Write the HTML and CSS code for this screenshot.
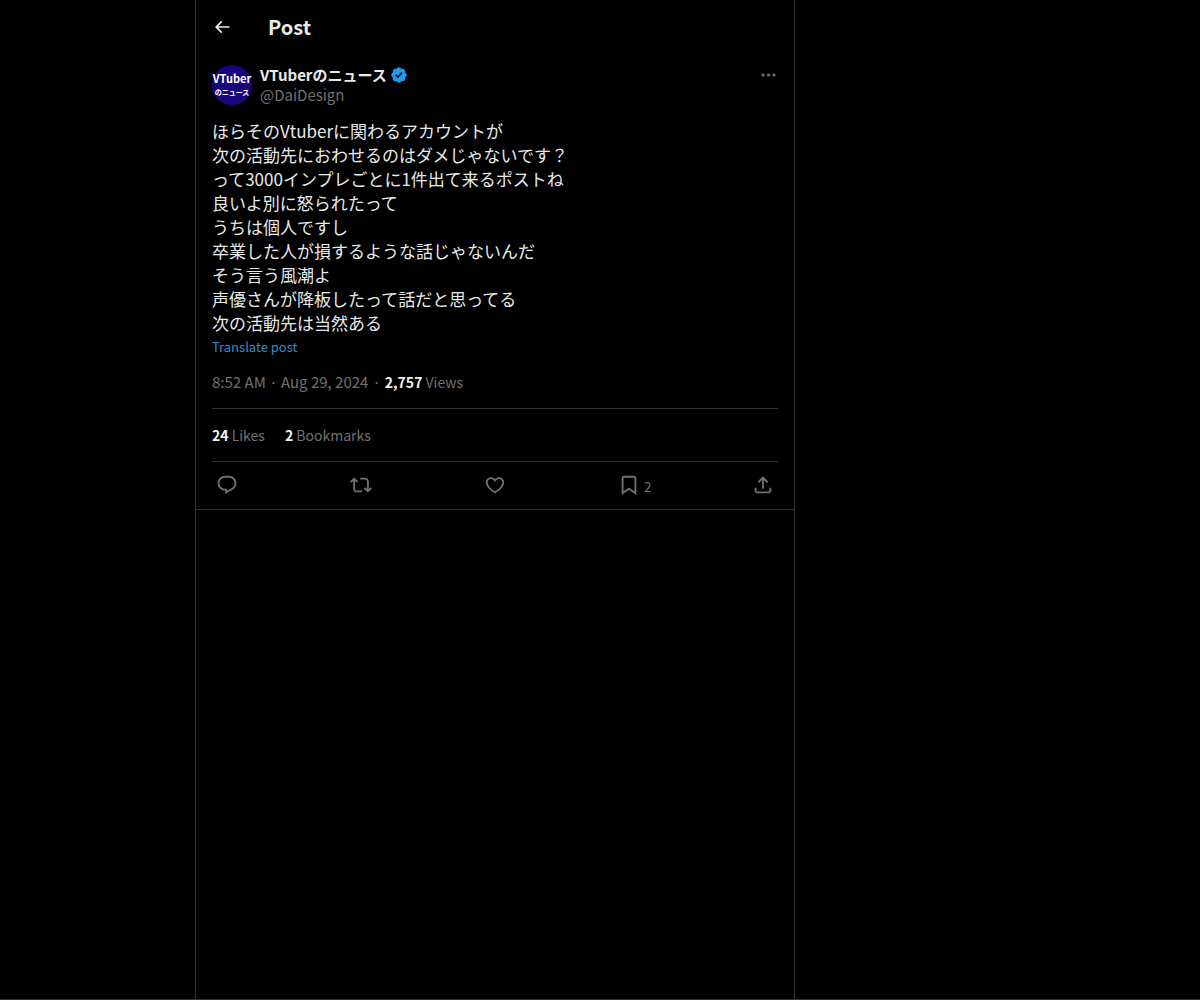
FILE: index.html
```html
<!DOCTYPE html>
<html lang="ja">
<head>
<meta charset="utf-8">
<meta name="viewport" content="width=device-width, initial-scale=1">
<title>Post</title>
<link rel="stylesheet" href="styles.css">
</head>
<body>
<main class="column">
  <header class="topbar">
    <button class="icon-button" type="button" aria-label="Back">
      <svg class="icon-small" viewBox="0 0 24 24" aria-hidden="true"><path d="M7.414 13l5.043 5.04-1.414 1.42L3.586 12l7.457-7.46 1.414 1.42L7.414 11H21v2H7.414z"/></svg>
    </button>
    <h1 class="title">Post</h1>
  </header>
  <article class="post">
    <div class="author">
      <div class="avatar"><span class="avatar-top">VTuber</span><span class="avatar-bottom">のニュース</span></div>
      <div class="identity">
        <a class="name" href="#">VTuberのニュース
          <svg class="badge" viewBox="0 0 22 22" aria-label="Verified account"><path d="M20.396 11c-.018-.646-.215-1.275-.57-1.816-.354-.54-.852-.972-1.438-1.246.223-.607.27-1.264.14-1.897-.131-.634-.437-1.218-.882-1.687-.47-.445-1.053-.75-1.687-.882-.633-.13-1.29-.083-1.897.14-.273-.587-.704-1.086-1.245-1.44S11.647 1.62 11 1.604c-.646.017-1.273.213-1.813.568s-.969.854-1.24 1.44c-.608-.223-1.267-.272-1.902-.14-.635.13-1.22.436-1.69.882-.445.47-.749 1.055-.878 1.688-.13.633-.08 1.29.144 1.896-.587.274-1.087.705-1.443 1.245-.356.54-.555 1.17-.574 1.817.02.647.218 1.276.574 1.817.356.54.856.972 1.443 1.245-.224.606-.274 1.263-.144 1.896.13.634.433 1.218.877 1.688.47.443 1.054.747 1.687.878.633.132 1.29.084 1.897-.136.274.586.705 1.084 1.246 1.439.54.354 1.17.551 1.816.569.647-.016 1.276-.213 1.817-.567s.972-.854 1.245-1.44c.604.239 1.266.296 1.903.164.636-.132 1.22-.447 1.68-.907.46-.46.776-1.044.908-1.681s.075-1.299-.165-1.903c.586-.274 1.084-.705 1.439-1.246.354-.54.551-1.17.569-1.816zM9.662 14.85l-3.429-3.428 1.293-1.302 2.072 2.072 4.4-4.794 1.347 1.246z"/></svg>
        </a>
        <a class="handle" href="#">@DaiDesign</a>
      </div>
      <button class="more" type="button" aria-label="More">
        <svg class="icon-more" viewBox="0 0 24 24" aria-hidden="true"><path d="M3 12c0-1.1.9-2 2-2s2 .9 2 2-.9 2-2 2-2-.9-2-2zm9 2c1.1 0 2-.9 2-2s-.9-2-2-2-2 .9-2 2 .9 2 2 2zm7 0c1.1 0 2-.9 2-2s-.9-2-2-2-2 .9-2 2 .9 2 2 2z"/></svg>
      </button>
    </div>
    <p class="body">ほらそのVtuberに関わるアカウントが<br>次の活動先におわせるのはダメじゃないです？<br>って3000インプレごとに1件出て来るポストね<br>良いよ別に怒られたって<br>うちは個人ですし<br>卒業した人が損するような話じゃないんだ<br>そう言う風潮よ<br>声優さんが降板したって話だと思ってる<br>次の活動先は当然ある</p>
    <button class="translate" type="button">Translate post</button>
    <div class="meta">
      <a href="#">8:52 AM · Aug 29, 2024</a><span class="dot">·</span><span class="figure"><strong>2,757</strong> Views</span>
    </div>
    <div class="stats">
      <a class="figure" href="#"><strong>24</strong> Likes</a>
      <span class="figure"><strong>2</strong> Bookmarks</span>
    </div>
    <div class="actions">
      <button class="action" type="button" aria-label="Reply"><svg class="icon" viewBox="0 0 24 24" aria-hidden="true"><path d="M1.751 10c0-4.42 3.584-8 8.005-8h4.366c4.49 0 8.129 3.64 8.129 8.13 0 2.96-1.607 5.68-4.196 7.11l-8.054 4.46v-3.69h-.067c-4.49.1-8.183-3.51-8.183-8.01zm8.005-6c-3.317 0-6.005 2.69-6.005 6 0 3.37 2.77 6.08 6.138 6.01l.351-.01h1.761v2.3l5.087-2.81c1.951-1.08 3.163-3.13 3.163-5.36 0-3.39-2.744-6.13-6.129-6.13H9.756z"/></svg></button>
      <button class="action" type="button" aria-label="Repost"><svg class="icon" viewBox="0 0 24 24" aria-hidden="true"><path d="M4.5 3.88l4.432 4.14-1.364 1.46L5.5 7.55V16c0 1.1.896 2 2 2H13v2H7.5c-2.209 0-4-1.79-4-4V7.55L1.432 9.48.068 8.02 4.5 3.88zM16.5 6H11V4h5.5c2.209 0 4 1.79 4 4v8.45l2.068-1.93 1.364 1.46-4.432 4.14-4.432-4.14 1.364-1.46 2.068 1.93V8c0-1.1-.896-2-2-2z"/></svg></button>
      <button class="action" type="button" aria-label="Like"><svg class="icon" viewBox="0 0 24 24" aria-hidden="true"><path d="M16.697 5.5c-1.222-.06-2.679.51-3.89 2.16l-.805 1.09-.806-1.09C9.984 6.01 8.526 5.44 7.304 5.5c-1.243.07-2.349.78-2.91 1.91-.552 1.12-.633 2.78.479 4.82 1.074 1.97 3.257 4.27 7.129 6.61 3.87-2.34 6.052-4.64 7.126-6.61 1.111-2.04 1.03-3.7.477-4.82-.561-1.13-1.666-1.84-2.908-1.91zm4.187 7.69c-1.351 2.48-4.001 5.12-8.379 7.67l-.503.3-.504-.3c-4.379-2.55-7.029-5.19-8.382-7.67-1.36-2.5-1.41-4.86-.514-6.67.887-1.79 2.647-2.91 4.601-3.01 1.651-.09 3.368.56 4.798 2.01 1.429-1.45 3.146-2.1 4.796-2.01 1.954.1 3.714 1.22 4.601 3.01.896 1.81.846 4.17-.514 6.67z"/></svg></button>
      <button class="action" type="button" aria-label="Bookmark"><svg class="icon" viewBox="0 0 24 24" aria-hidden="true"><path d="M4 4.5C4 3.12 5.119 2 6.5 2h11C18.881 2 20 3.12 20 4.5v18.44l-8-5.71-8 5.71V4.5zM6.5 4c-.276 0-.5.22-.5.5v14.56l6-4.29 6 4.29V4.5c0-.28-.224-.5-.5-.5h-11z"/></svg><span class="count">2</span></button>
      <button class="action" type="button" aria-label="Share"><svg class="icon" viewBox="0 0 24 24" aria-hidden="true"><path d="M12 2.59l5.7 5.7-1.41 1.42L13 6.41V16h-2V6.41l-3.3 3.3-1.41-1.42L12 2.59zM21 15l-.02 3.51c0 1.38-1.12 2.49-2.5 2.49H5.5C4.11 21 3 19.88 3 18.5V15h2v3.5c0 .28.22.5.5.5h12.98c.28 0 .5-.22.5-.5L19 15h2z"/></svg></button>
    </div>
  </article>
</main>
</body>
</html>
```
FILE: styles.css
```css
* {
  box-sizing: border-box;
}

body {
  margin: 0;
  min-height: 100vh;
  display: grid;
  grid-template-columns: 13fr minmax(0, 600px) 27fr;
  background: #000;
  border-bottom: 1px solid #333;
  color: #e7e9ea;
  font-family: "Noto Sans CJK JP", sans-serif;
  font-size: 15px;
  line-height: 20px;
}

button {
  padding: 0;
  border: 0;
  background: none;
  color: inherit;
  font: inherit;
  cursor: pointer;
}

a {
  color: inherit;
  text-decoration: none;
}

svg {
  display: block;
  flex: none;
  fill: currentColor;
}

strong {
  color: #f2f2f2;
  font-weight: 700;
}

.column {
  grid-column: 2;
  border: solid #333;
  border-width: 0 1px;
}

.topbar {
  display: flex;
  align-items: center;
  gap: 36px;
  height: 53px;
  padding: 0 16px;
}

.icon-button {
  display: flex;
  justify-content: center;
  width: 20px;
}

.icon-small {
  width: 20px;
  height: 20px;
}

.icon-more {
  width: 19px;
  height: 20px;
}

.title {
  margin: 0;
  font-size: 20px;
  line-height: 24px;
  font-weight: 700;
}

.post {
  padding: 12px 16px 0;
  border-bottom: 1px solid #333;
}

.author {
  display: flex;
  align-items: flex-start;
  gap: 8px;
}

.avatar {
  display: flex;
  flex-direction: column;
  align-items: center;
  justify-content: center;
  width: 40px;
  height: 40px;
  border-radius: 50%;
  background: #19057c;
  color: #fff;
  font-weight: 700;
  white-space: nowrap;
}

.avatar-top {
  font-size: 11px;
  line-height: 15px;
}

.avatar-bottom {
  font-size: 7px;
  line-height: 13px;
}

.identity {
  flex: 1;
  min-width: 0;
}

.name {
  display: flex;
  align-items: center;
  gap: 3px;
  font-weight: 700;
}

.badge {
  width: 18px;
  height: 18px;
  color: #1d9bf0;
}

.handle {
  display: block;
}

.handle,
.more,
.meta,
.stats,
.actions {
  color: #717171;
}

.body {
  margin: 14px 0 0;
  font-size: 17px;
  line-height: 24px;
}

.translate {
  display: block;
  color: #3a8ccb;
  font-size: 13px;
  line-height: 24px;
}

.meta {
  padding: 13px 0 16px;
}

.figure {
  font-size: 14px;
}

.dot {
  padding: 0 4px;
}

.stats {
  display: flex;
  gap: 20px;
  padding: 16px 0;
  border: solid #333;
  border-width: 1px 0;
}

.actions {
  display: flex;
  justify-content: space-between;
  padding: 12px 4px 13px;
}

.action {
  display: flex;
  align-items: center;
  gap: 4px;
  width: 22px;
  height: 22px;
}

.icon {
  width: 22px;
  height: 22px;
}

.count {
  padding-top: 4px;
  font-size: 13px;
}
```
